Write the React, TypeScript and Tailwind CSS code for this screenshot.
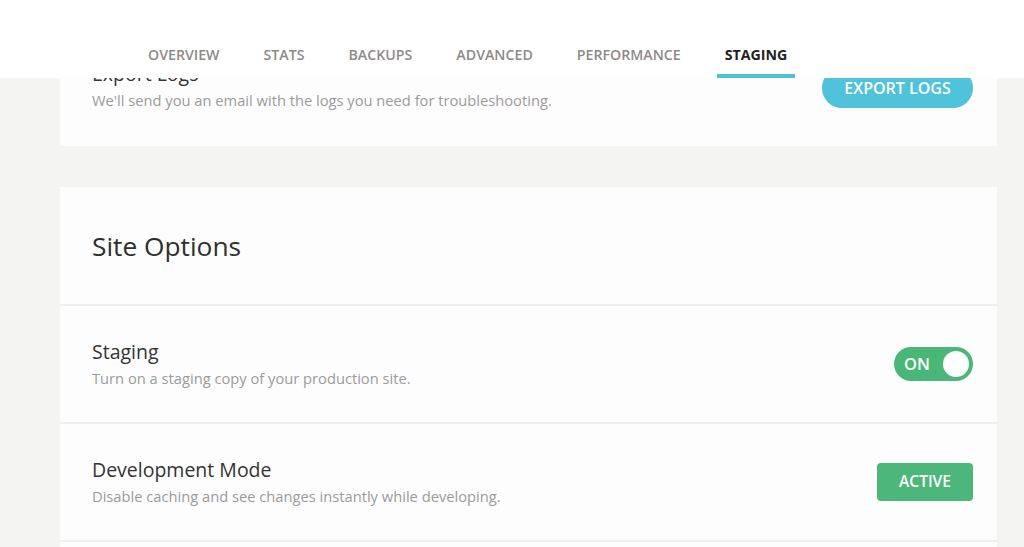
import React from "react";

const tabs = ["OVERVIEW", "STATS", "BACKUPS", "ADVANCED", "PERFORMANCE", "STAGING"];

function Row({ title, desc, children }: { title: string; desc: string; children: React.ReactNode }) {
  return (
    <div className="flex h-[118px] items-center justify-between border-t-2 border-[#efefed] pl-8 pr-6">
      <div className="flex flex-col">
        <div className="text-[19.5px] font-medium leading-[24px] text-[#333333]">{title}</div>
        <div className="mt-[4px] text-[14.7px] leading-5 text-[#9b9b9b]">{desc}</div>
      </div>
      {children}
    </div>
  );
}

export default function App() {
  return (
    <div
      className="relative h-[547px] w-[1024px] overflow-hidden bg-[#f4f4f2]"
      style={{ fontFamily: '"Open Sans", "Liberation Sans", sans-serif' }}
    >
      <div className="flex flex-col pt-[24px]">
        <div className="ml-[60px] flex h-[122px] w-[937px] items-center justify-between bg-[#fdfdfd] pl-8 pr-6">
          <div className="mt-[2px] flex flex-col">
            <div className="text-[19.5px] font-medium leading-[24px] text-[#333333]">Export Logs</div>
            <div className="mt-[4px] text-[14.7px] leading-5 text-[#9b9b9b]">
              We'll send you an email with the logs you need for troubleshooting.
            </div>
          </div>
          <button className="mt-[6px] flex h-[40px] w-[151px] items-center justify-center rounded-full bg-[#4fc3d9] text-[16px] font-semibold text-white">
            EXPORT LOGS
          </button>
        </div>

        <div className="ml-[60px] mt-[41px] flex w-[937px] flex-col bg-[#fdfdfd]">
          <div className="flex h-[117px] items-center pl-8">
            <div className="text-[26.3px] leading-8 text-[#2f2f2f]">Site Options</div>
          </div>
          <Row title="Staging" desc="Turn on a staging copy of your production site.">
            <div className="flex h-[34px] w-[79px] items-center justify-between rounded-full bg-[#4ab677] pl-[10px] pr-[4px]">
              <span className="text-[16.5px] font-semibold text-white">ON</span>
              <span className="h-[26px] w-[26px] rounded-full bg-white" />
            </div>
          </Row>
          <Row title="Development Mode" desc="Disable caching and see changes instantly while developing.">
            <button className="flex h-[38px] w-[96px] items-center justify-center rounded-[4px] bg-[#4db77a] text-[15.5px] font-semibold text-white">
              ACTIVE
            </button>
          </Row>
          <div className="h-[60px] border-t-2 border-[#efefed]" />
        </div>
      </div>

      <div className="absolute left-0 right-0 top-0 flex h-[78px] bg-white pl-[140px]">
        <nav className="flex gap-7">
          {tabs.map((t) => {
            const active = t === "STAGING";
            return (
              <div key={t} className="flex flex-col justify-end">
                <span
                  className={`px-2 text-[14.2px] leading-4 ${
                    active ? "font-bold text-[#222222]" : "font-semibold text-[#8e8a88]"
                  }`}
                >
                  {t}
                </span>
                <span className={`mt-[11px] h-[4px] ${active ? "bg-[#4cc2d6]" : "bg-transparent"}`} />
              </div>
            );
          })}
        </nav>
      </div>
    </div>
  );
}
